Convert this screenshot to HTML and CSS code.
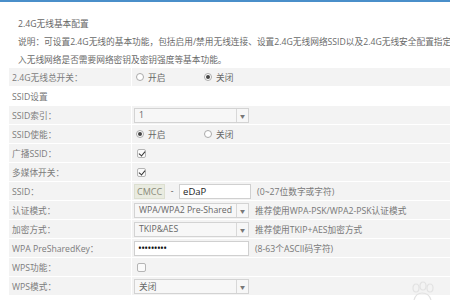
FILE: index.html
```html
<!DOCTYPE html>
<html>
  <head>
    <title>2.4G无线基本配置</title>
    <link rel="stylesheet" href="styles.css">
  </head>
  <body>
    <div class="topbar"></div>
    <div class="page">
      <div class="side"></div>
      <main class="content">
        <h1 class="title">2.4G无线基本配置</h1>
        <p class="desc">说明：可设置2.4G无线的基本功能，包括启用/禁用无线连接、设置2.4G无线网络SSID以及2.4G无线安全配置指定加</p>
        <p class="desc">入无线网络是否需要网络密钥及密钥强度等基本功能。</p>

        <div class="form">
          <div class="row">
            <div class="label">2.4G无线总开关：</div>
            <div class="value">
              <span class="radio"></span><span class="opt">开启</span>
              <span class="radio on"></span><span class="opt">关闭</span>
            </div>
          </div>
          <div class="row plain">
            <div class="section">SSID设置</div>
          </div>
          <div class="row">
            <div class="label">SSID索引：</div>
            <div class="value">
              <div class="select"><span>1</span><i>▼</i></div>
            </div>
          </div>
          <div class="row">
            <div class="label">SSID使能：</div>
            <div class="value">
              <span class="radio on"></span><span class="opt">开启</span>
              <span class="radio"></span><span class="opt">关闭</span>
            </div>
          </div>
          <div class="row">
            <div class="label">广播SSID：</div>
            <div class="value"><span class="check on"></span></div>
          </div>
          <div class="row">
            <div class="label">多媒体开关：</div>
            <div class="value"><span class="check on"></span></div>
          </div>
          <div class="row">
            <div class="label">SSID：</div>
            <div class="value">
              <span class="prefix">CMCC</span>
              <span class="dash">-</span>
              <div class="input short">eDaP</div>
              <span class="hint">(0~27位数字或字符)</span>
            </div>
          </div>
          <div class="row">
            <div class="label">认证模式：</div>
            <div class="value">
              <div class="select"><span>WPA/WPA2 Pre-Shared</span><i>▼</i></div>
              <span class="hint">推荐使用WPA-PSK/WPA2-PSK认证模式</span>
            </div>
          </div>
          <div class="row">
            <div class="label">加密方式：</div>
            <div class="value">
              <div class="select"><span>TKIP&amp;AES</span><i>▼</i></div>
              <span class="hint">推荐使用TKIP+AES加密方式</span>
            </div>
          </div>
          <div class="row">
            <div class="label">WPA PreSharedKey：</div>
            <div class="value">
              <div class="input key">•••••••••</div>
              <span class="hint">(8-63个ASCII码字符)</span>
            </div>
          </div>
          <div class="row">
            <div class="label">WPS功能：</div>
            <div class="value"><span class="check"></span></div>
          </div>
          <div class="row">
            <div class="label">WPS模式：</div>
            <div class="value">
              <div class="select"><span>关闭</span><i>▼</i></div>
            </div>
          </div>
        </div>
      </main>
    </div>
    <svg class="mark" viewBox="0 0 40 20" width="40" height="20">
      <g fill="none" stroke="#e2e2e2" stroke-width="1.2">
        <ellipse cx="14" cy="8" rx="3" ry="4" />
        <ellipse cx="21" cy="6" rx="3" ry="4" />
        <ellipse cx="28" cy="8" rx="3" ry="4" />
        <path d="M12 20 Q14 13 20 13 Q27 13 29 20" />
      </g>
    </svg>
  </body>
</html>
```

FILE: styles.css
```css
* {
  margin: 0;
  padding: 0;
  box-sizing: border-box;
}

body {
  width: 450px;
  height: 300px;
  overflow: hidden;
  background-color: #fff;
  font-family: "Open Sans", "Noto Sans CJK SC", sans-serif;
  font-size: 8.7px;
  color: #6b6b6b;
}

.topbar {
  height: 2px;
  background-color: #4a8fca;
}

.page {
  display: flex;
  height: 298px;
  background-color: #fafafa;
}

.side {
  width: 4px;
  margin-top: 2px;
  background-color: #b4b4b4;
}

.content {
  flex: 1;
  padding-left: 9px;
  padding-top: 13px;
  background-color: #fff;
  white-space: nowrap;
}

.title {
  font-size: 8.7px;
  font-weight: normal;
  color: #666;
  padding-left: 9px;
  line-height: 18px;
}

.desc {
  padding-left: 9px;
  line-height: 18px;
  color: #6a6a6a;
}

.form {
  margin-top: -1px;
}

.row {
  display: flex;
  height: 19px;
  align-items: stretch;
  background-color: #f3f3f3;
  border-bottom: 1px solid #fff;
}

.row.plain {
  background-color: #fff;
}

.label {
  width: 122px;
  padding-left: 3px;
  display: flex;
  align-items: center;
  color: #7c7c7c;
}

.section {
  padding-left: 3px;
  display: flex;
  align-items: center;
  color: #777;
}

.value {
  flex: 1;
  display: flex;
  align-items: center;
  padding-left: 2px;
  border-left: 1px solid #fff;
}

.radio {
  width: 8px;
  height: 8px;
  border: 1px solid #aaa;
  border-radius: 50%;
  background-color: #fff;
  margin-left: 2px;
  margin-right: 4px;
  display: inline-flex;
  align-items: center;
  justify-content: center;
}

.radio.on::after {
  content: '';
  width: 4px;
  height: 4px;
  border-radius: 50%;
  background-color: #444;
}

.opt {
  width: 54px;
  color: #666;
}

.check {
  width: 9px;
  height: 9px;
  margin-left: 3px;
  border: 1px solid #b5b5b5;
  border-radius: 2px;
  background-color: #fafafa;
  position: relative;
}

.check.on::after {
  content: '';
  position: absolute;
  left: 2px;
  top: 0;
  width: 3px;
  height: 5px;
  border-right: 1.5px solid #333;
  border-bottom: 1.5px solid #333;
  transform: rotate(40deg);
}

.select {
  width: 115px;
  height: 15px;
  border: 1px solid #d3d3d3;
  background-color: #f7f7f7;
  display: flex;
  align-items: center;
  color: #666;
}

.select span {
  flex: 1;
  padding-left: 4px;
  overflow: hidden;
}

.select i {
  width: 12px;
  height: 100%;
  border-left: 1px solid #d8d8d8;
  font-style: normal;
  font-size: 5px;
  color: #777;
  display: flex;
  align-items: center;
  justify-content: center;
}

.hint {
  margin-left: 6px;
  color: #777;
}

.prefix {
  background-color: #e9ebe0;
  border: 1px solid #dcdfd0;
  height: 15px;
  line-height: 13px;
  padding: 0 2px;
  font-size: 9px;
  color: #8a8a7a;
}

.dash {
  width: 14px;
  text-align: center;
  color: #555;
}

.input {
  height: 15px;
  border: 1px solid #d0d0d0;
  background-color: #fff;
  display: flex;
  align-items: center;
  padding-left: 3px;
}

.input.short {
  width: 72px;
  font-size: 9.5px;
  color: #222;
}

.input.key {
  width: 115px;
  font-size: 10px;
  letter-spacing: -0.6px;
  color: #111;
}

.mark {
  position: absolute;
  right: 8px;
  bottom: 0;
}
```
